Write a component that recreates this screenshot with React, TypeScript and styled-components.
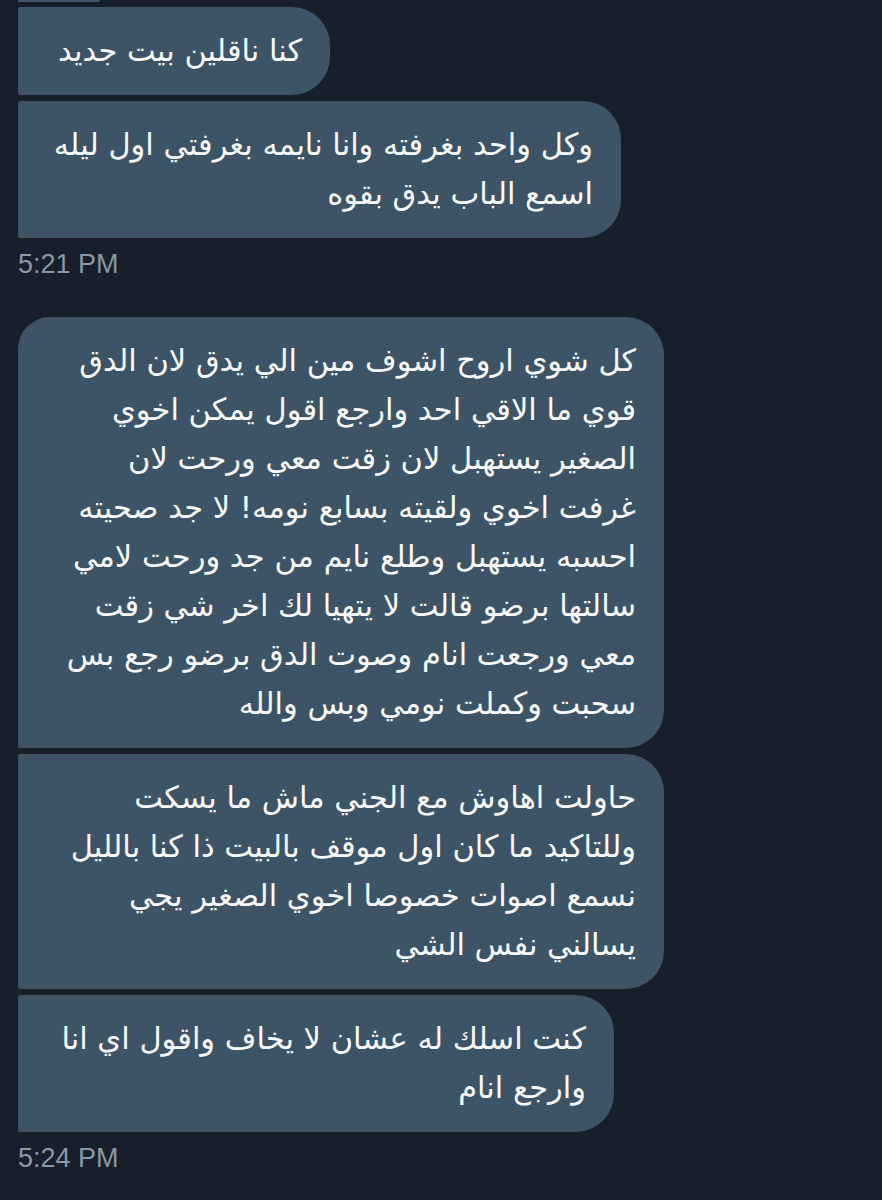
import React from "react";
import styled, { createGlobalStyle, css } from "styled-components";

const Global = createGlobalStyle`
  html, body {
    margin: 0;
    padding: 0;
    background: #161f2a;
  }
  #root {
    min-height: 1200px;
  }
`;

const Page = styled.div`
  min-height: 1200px;
  background: #161f2a;
  padding: 0 0 0 18px;
  box-sizing: border-box;
  overflow: hidden;
`;

const Thread = styled.div`
  display: flex;
  flex-direction: column;
  align-items: flex-start;
`;

const Peek = styled.div`
  width: 82px;
  height: 2px;
  background: #3d5466;
  border-bottom-right-radius: 6px;
`;

const Group = styled.div<{ $gapTop: number }>`
  display: flex;
  flex-direction: column;
  align-items: flex-start;
  gap: 6px;
  margin-top: ${(p) => p.$gapTop}px;
`;

const Bubble = styled.div<{ $w: number; $first?: boolean }>`
  width: ${(p) => p.$w}px;
  box-sizing: border-box;
  background: #3d5466;
  color: #f7f9fa;
  font-family: "DejaVu Sans", sans-serif;
  font-size: 30.5px;
  line-height: 49px;
  padding: 19px 28px 20px 18px;
  border-radius: 2px 38px 38px 2px;
  ${(p) =>
    p.$first &&
    css`
      border-top-left-radius: 32px;
    `}
  direction: rtl;
  text-align: right;
`;

const Line = styled.span`
  display: block;
  white-space: nowrap;
`;

const Stamp = styled.div`
  margin-top: 4px;
  font-family: "Liberation Sans", Arial, sans-serif;
  font-size: 27px;
  line-height: 32px;
  color: #8a98a6;
`;

type Msg = { w: number; lines: string[]; first?: boolean };

const groups: { gapTop: number; stamp: string; msgs: Msg[] }[] = [
  {
    gapTop: 5,
    stamp: "5:21 PM",
    msgs: [
      { w: 312, lines: ["كنا ناقلين بيت جديد"] },
      {
        w: 603,
        lines: ["وكل واحد بغرفته وانا نايمه بغرفتي اول ليله", "اسمع الباب يدق بقوه"],
      },
    ],
  },
  {
    gapTop: 37,
    stamp: "5:24 PM",
    msgs: [
      {
        w: 646,
        first: true,
        lines: [
          "كل شوي اروح اشوف مين الي يدق لان الدق",
          "قوي ما الاقي احد وارجع اقول يمكن اخوي",
          "الصغير يستهبل لان زقت معي ورحت لان",
          "غرفت اخوي ولقيته بسابع نومه! لا جد صحيته",
          "احسبه يستهبل وطلع نايم من جد ورحت لامي",
          "سالتها برضو قالت لا يتهيا لك اخر شي زقت",
          "معي ورجعت انام وصوت الدق برضو رجع بس",
          "سحبت وكملت نومي وبس والله",
        ],
      },
      {
        w: 646,
        lines: [
          "حاولت اهاوش مع الجني ماش ما يسكت",
          "وللتاكيد ما كان اول موقف بالبيت ذا كنا بالليل",
          "نسمع اصوات خصوصا اخوي الصغير يجي",
          "يسالني نفس الشي",
        ],
      },
      {
        w: 596,
        lines: ["كنت اسلك له عشان لا يخاف واقول اي انا", "وارجع انام"],
      },
    ],
  },
];

export default function App() {
  return (
    <>
      <Global />
      <Page>
        <Thread>
          <Peek />
          {groups.map((g, gi) => (
            <Group key={gi} $gapTop={g.gapTop}>
              {g.msgs.map((m, mi) => (
                <Bubble key={mi} $w={m.w} $first={m.first}>
                  {m.lines.map((l, li) => (
                    <Line key={li}>{l}</Line>
                  ))}
                </Bubble>
              ))}
              <Stamp>{g.stamp}</Stamp>
            </Group>
          ))}
        </Thread>
      </Page>
    </>
  );
}
